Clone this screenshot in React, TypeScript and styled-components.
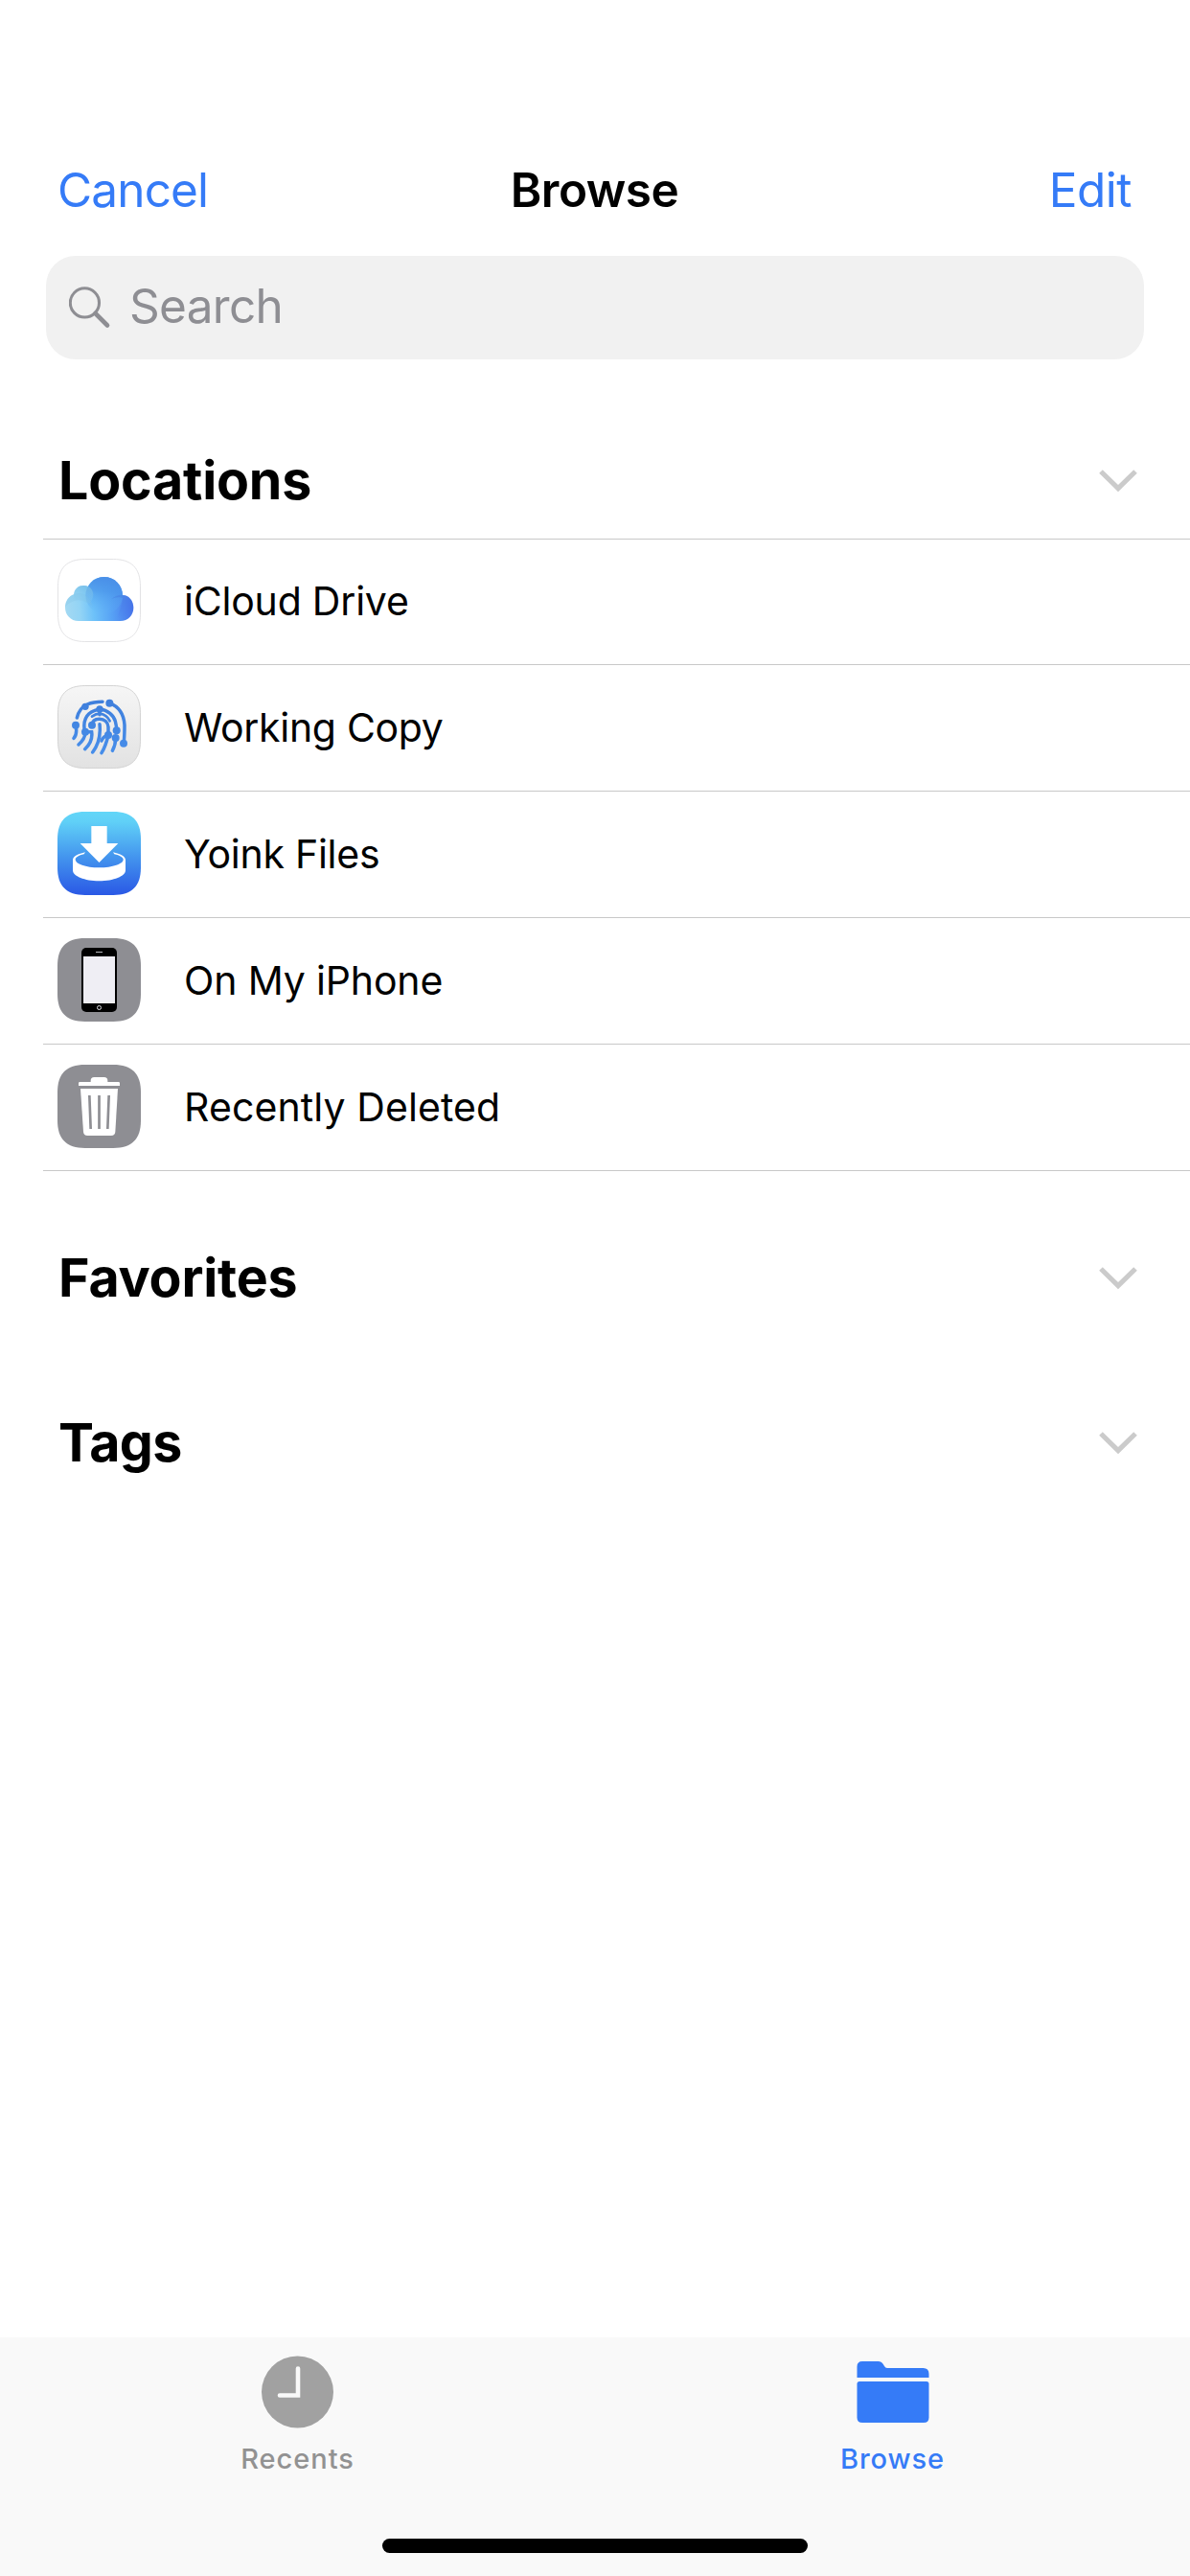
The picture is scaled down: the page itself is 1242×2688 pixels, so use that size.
import React from 'react';
import styled, { createGlobalStyle } from 'styled-components';

const blue = '#357bf7';
const gray = '#8e8e93';

const GlobalStyle = createGlobalStyle`
  body {
    margin: 0;
    background: #fff;
    font-family: Inter, 'Liberation Sans', sans-serif;
    color: #000;
  }
  svg { display: block; flex: none; }
`;

const Screen = styled.div`
  display: flex;
  flex-direction: column;
  width: 1242px;
  height: 2688px;
  overflow: hidden;
`;

const NavBar = styled.header`
  display: grid;
  grid-template-columns: 1fr auto 1fr;
  align-items: center;
  height: 132px;
  margin-top: 132px;
  padding: 0 61px 0 60px;
  font-size: 49.5px;
`;

const NavButton = styled.button<{ $end?: boolean; $tracking: number }>`
  justify-self: ${(p) => (p.$end ? 'end' : 'start')};
  padding: 0;
  border: 0;
  background: none;
  font: inherit;
  color: ${blue};
  letter-spacing: ${(p) => p.$tracking}px;
`;

const Title = styled.h1`
  margin: 0;
  font-size: inherit;
  font-weight: 600;
  letter-spacing: -0.5px;
`;

const SearchBar = styled.label`
  display: flex;
  align-items: center;
  gap: 18px;
  height: 108px;
  margin: 3px 48px 0;
  padding: 0 24px;
  box-sizing: border-box;
  border-radius: 31px;
  background: #f1f1f1;
`;

const Placeholder = styled.span`
  padding-bottom: 4px;
  font-size: 49.5px;
  letter-spacing: -0.7px;
  color: ${gray};
`;

const SectionHeader = styled.div<{ $gap: number }>`
  display: flex;
  align-items: center;
  justify-content: space-between;
  height: 120px;
  margin-top: ${(p) => p.$gap}px;
  padding: 0 55px 0 61px;
`;

const SectionTitle = styled.h2<{ $tracking: number }>`
  margin: 0;
  padding-bottom: 3px;
  font-size: 55.5px;
  font-weight: 700;
  letter-spacing: ${(p) => p.$tracking}px;
`;

const List = styled.ul`
  margin: 0 0 0 45px;
  padding: 0;
  list-style: none;
  border-top: 1px solid #c8c8c8;
`;

const Row = styled.li`
  display: flex;
  align-items: center;
  gap: 45px;
  height: 132px;
  box-sizing: border-box;
  padding: 0 0 2px 15px;
  border-bottom: 1px solid #c8c8c8;

  &:first-child {
    height: 131px;
    padding-bottom: 3px;
  }
`;

const RowLabel = styled.span<{ $tracking: number }>`
  font-size: 41px;
  letter-spacing: ${(p) => p.$tracking}px;
`;

const TabBar = styled.nav`
  display: flex;
  flex-direction: column;
  align-items: center;
  justify-content: space-between;
  height: 249px;
  margin-top: auto;
  padding: 19px 0 24px;
  box-sizing: border-box;
  background: #f9f9f9;
`;

const Tabs = styled.div`
  display: grid;
  grid-template-columns: 1fr 1fr;
  width: 100%;
`;

const Tab = styled.div<{ $active?: boolean }>`
  display: flex;
  flex-direction: column;
  align-items: center;
  gap: 14px;
  color: ${(p) => (p.$active ? blue : '#929292')};
  font-size: 29px;
  font-weight: 500;
  line-height: 36px;
  letter-spacing: 0.95px;
`;

const HomeIndicator = styled.div`
  width: 444px;
  height: 15px;
  border-radius: 8px;
  background: #000;
`;

const SearchIcon = () => (
  <svg width="45" height="45" viewBox="72 298.5 45 45" fill="none" stroke={gray}>
    <circle cx="88.4" cy="315.4" r="15.1" strokeWidth="3.1" />
    <path d="M99.5 326.5 112 339" strokeWidth="4.6" strokeLinecap="round" />
  </svg>
);

const Chevron = () => (
  <svg width="40" height="26" viewBox="0 0 40 26" fill="none">
    <path d="M2 3 20 20.5 38 3" stroke="#cbcbcb" strokeWidth="5.2" />
  </svg>
);

const TILE = 'M60 131C60 73 88 45 146 45H235C293 45 321 73 321 131V220C321 278 293 306 235 306H146C88 306 60 278 60 220Z';

const Tile = ({ children, fill, stroke }: { children: React.ReactNode; fill: string; stroke?: string }) => (
  <svg width="87" height="87" viewBox="60 45 261 261">
    <path
      d={TILE}
      fill={fill}
      stroke={stroke}
      strokeWidth={stroke ? 3 : 0}
      transform={stroke ? 'translate(190.5 175.5) scale(.988) translate(-190.5 -175.5)' : undefined}
    />
    {children}
  </svg>
);

const CloudIcon = () => (
  <Tile fill="#fff" stroke="#e3e3e5">
    <defs>
      <linearGradient id="cloud" gradientUnits="userSpaceOnUse" x1="84" y1="215" x2="298" y2="200">
        <stop offset="0" stopColor="#a4d9f2" />
        <stop offset=".22" stopColor="#93d4f5" />
        <stop offset=".42" stopColor="#6dc1f9" />
        <stop offset=".68" stopColor="#57a2f5" />
        <stop offset="1" stopColor="#4673ea" />
      </linearGradient>
      <linearGradient id="crown" gradientUnits="userSpaceOnUse" x1="205" y1="100" x2="190" y2="215">
        <stop offset="0" stopColor="#4a90e8" />
        <stop offset=".35" stopColor="#4b97ea" stopOpacity=".75" />
        <stop offset="1" stopColor="#62b6f7" stopOpacity="0" />
      </linearGradient>
      <linearGradient id="puff" gradientUnits="userSpaceOnUse" x1="145" y1="126" x2="135" y2="185">
        <stop offset="0" stopColor="#79bfe6" stopOpacity=".7" />
        <stop offset="1" stopColor="#8fd0f3" stopOpacity="0" />
      </linearGradient>
      <linearGradient id="lobe" gradientUnits="userSpaceOnUse" x1="250" y1="156" x2="262" y2="225">
        <stop offset="0" stopColor="#4680e2" stopOpacity=".55" />
        <stop offset="1" stopColor="#4870e8" stopOpacity="0" />
      </linearGradient>
    </defs>
    <g transform="translate(0 6)">
      <path d="M126 234C101 234 84 215 84 192C84 171 96 156 111 151C113 133 126 123 142 123C147 123 152 124 156 126C165 107 184 96 206 96C238 96 263 120 264 153C284 153 298 171 298 192C298 216 281 234 257 234Z" fill="url(#cloud)" />
      <circle cx="206" cy="154" r="58" fill="url(#crown)" />
      <path d="M111 151C113 133 126 123 142 123C147 123 152 124 156 126C166 131 172 141 172 152C170 172 158 184 141 184C123 184 111 170 111 151Z" fill="url(#puff)" />
      <path d="M84 192C84 167 103 148 126 147C148 147 164 163 169 187C158 175 130 162 110 172C96 178 88 184 84 192Z" fill="#7dbfe4" opacity=".25" />
      <path d="M228 166C238 156 251 152 264 153C284 153 298 171 298 192C298 216 281 234 257 234C237 228 262 195 264 162C252 157 239 160 228 166Z" fill="url(#lobe)" />
    </g>
  </Tile>
);

const FingerprintIcon = () => (
  <Tile fill="url(#paper)" stroke="#d2d2d2">
    <defs>
      <linearGradient id="paper" x1="0" y1="0" x2="0" y2="1">
        <stop offset="0" stopColor="#f6f6f6" />
        <stop offset="1" stopColor="#e2e2e2" />
      </linearGradient>
      <linearGradient id="ink" gradientUnits="userSpaceOnUse" x1="0" y1="90" x2="0" y2="260">
        <stop offset="0" stopColor="#3f7fdc" />
        <stop offset="1" stopColor="#478eea" />
      </linearGradient>
    </defs>
    <g fill="none" stroke="url(#ink)" strokeWidth="10.5" strokeLinecap="round">
      <path d="M121 147C126 126 137 112 153 105C168 99 184 97 201 97" />
      <path d="M223 101C252 112 268 137 270 170C270 192 270 210 267 227" />
      <path d="M146 191C138 158 150 134 175 125Q184 121 192 120C218 123 236 139 241 158C244 169 245 178 245 187" />
      <path d="M192 120V137" />
      <path d="M168 170C169 158 178 151 191 151C207 151 218 161 219 176V201C214 223 208 241 198 257" />
      <path d="M168 143C176 137 184 134 193 134C207 136 218 145 224 157" strokeWidth="8" />
      <path d="M192 167C195 196 192 226 170 255" />
      <path d="M146 191C149 207 138 220 126 231" />
      <path d="M146 191H167C170 211 162 230 146 245" />
      <path d="M117 171C121 189 119 202 111 211" />
      <path d="M219 201C205 204 201 211 198 219" />
      <path d="M242 210C242 226 238 239 232 250" />
    </g>
    <g fill="url(#ink)">
      <circle cx="147" cy="112" r="11" />
      <circle cx="223" cy="101" r="12" />
      <circle cx="192" cy="120" r="11" />
      <circle cx="117" cy="170" r="12" />
      <circle cx="168" cy="170" r="12" />
      <circle cx="147" cy="191" r="12" />
      <circle cx="219" cy="201" r="12" />
      <circle cx="245" cy="187" r="12" />
      <circle cx="242" cy="210" r="12" />
      <circle cx="267" cy="227" r="12" />
    </g>
  </Tile>
);

const YoinkIcon = () => (
  <Tile fill="url(#sky)">
    <defs>
      <linearGradient id="sky" x1="0" y1="0" x2="0" y2="1">
        <stop offset="0" stopColor="#62d6f8" />
        <stop offset=".12" stopColor="#60d0f7" />
        <stop offset=".55" stopColor="#4394ee" />
        <stop offset="1" stopColor="#2a58e5" />
      </linearGradient>
    </defs>
    <g transform="translate(0 -6)">
      <path d="M166 96H215V150H250L190.500 210 131 150H166Z" fill="#fff" />
      <path d="M147 178C124 183 108 191 108 202V235C108 253 145 268 190.500 268S273 253 273 235V202C273 191 257 183 234 178L238 184C255 188 266 194 266 201C266 214 233 226 190.500 226S116 214 116 201C116 194 126 188 143 184Z" fill="#fff" />
    </g>
  </Tile>
);

const PhoneIcon = () => (
  <Tile fill={gray}>
    <g transform="translate(0 -12)">
      <rect x="135" y="87" width="111" height="201" rx="15" fill="#000" />
      <rect x="141" y="114" width="99" height="147" fill="#efeef4" />
      <path d="M180 100.500H201" stroke="#b9b9bd" strokeWidth="3" />
      <circle cx="190.5" cy="274.500" r="6" fill="none" stroke="#dcdce0" strokeWidth="3" />
    </g>
  </Tile>
);

const TrashIcon = () => (
  <Tile fill={gray}>
    <g transform="translate(0 -18)">
      <path d="M126 129V121Q126 117 130 117H164V113Q164 102 175 102H206Q217 102 217 113V117H251Q255 117 255 121V129Z" fill="#fff" />
      <path d="M132 138H249L241 273Q240 285 228 285H154Q142 285 141 273Z" fill="#fff" />
      <path d="M160 159 164 264M190.500 159V264M221 159 217 264" stroke={gray} strokeWidth="8" />
    </g>
  </Tile>
);

const ClockIcon = () => (
  <svg width="76" height="76" viewBox="0 0 76 76">
    <circle cx="37.500" cy="38" r="37.500" fill="#a1a1a1" />
    <path d="M38 13.500V41.500H19" fill="none" stroke="#f9f9f9" strokeWidth="4.600" strokeLinecap="round" />
  </svg>
);

const FolderIcon = () => (
  <svg width="76" height="76" viewBox="0 0 76 76" fill={blue}>
    <path d="M.5 23V11.500Q.5 6 6 6H22.500Q26 6 27.800 9L29 11Q30 13 32 13H69.500Q75.500 13 75.500 19V23Z" />
    <path d="M3 27H73Q75.500 27 75.500 29.500V64.500Q75.500 70 70 70H6Q.5 70 .5 64.500V29.500Q.5 27 3 27Z" />
  </svg>
);

const locations = [
  { name: 'iCloud Drive', tracking: -0.2, Icon: CloudIcon },
  { name: 'Working Copy', tracking: -0.3, Icon: FingerprintIcon },
  { name: 'Yoink Files', tracking: -0.25, Icon: YoinkIcon },
  { name: 'On My iPhone', tracking: -0.15, Icon: PhoneIcon },
  { name: 'Recently Deleted', tracking: 0.1, Icon: TrashIcon },
];

export default function App() {
  return (
    <Screen>
      <GlobalStyle />
      <NavBar>
        <NavButton $tracking={-0.85}>Cancel</NavButton>
        <Title>Browse</Title>
        <NavButton $end $tracking={-0.5}>Edit</NavButton>
      </NavBar>
      <SearchBar>
        <SearchIcon />
        <Placeholder>Search</Placeholder>
      </SearchBar>
      <SectionHeader $gap={67}>
        <SectionTitle $tracking={-0.2}>Locations</SectionTitle>
        <Chevron />
      </SectionHeader>
      <List>
        {locations.map(({ name, tracking, Icon }) => (
          <Row key={name}>
            <Icon />
            <RowLabel $tracking={tracking}>{name}</RowLabel>
          </Row>
        ))}
      </List>
      <SectionHeader $gap={52}>
        <SectionTitle $tracking={-0.2}>Favorites</SectionTitle>
        <Chevron />
      </SectionHeader>
      <SectionHeader $gap={52}>
        <SectionTitle $tracking={-0.7}>Tags</SectionTitle>
        <Chevron />
      </SectionHeader>
      <TabBar>
        <Tabs>
          <Tab>
            <ClockIcon />
            Recents
          </Tab>
          <Tab $active>
            <FolderIcon />
            Browse
          </Tab>
        </Tabs>
        <HomeIndicator />
      </TabBar>
    </Screen>
  );
}
